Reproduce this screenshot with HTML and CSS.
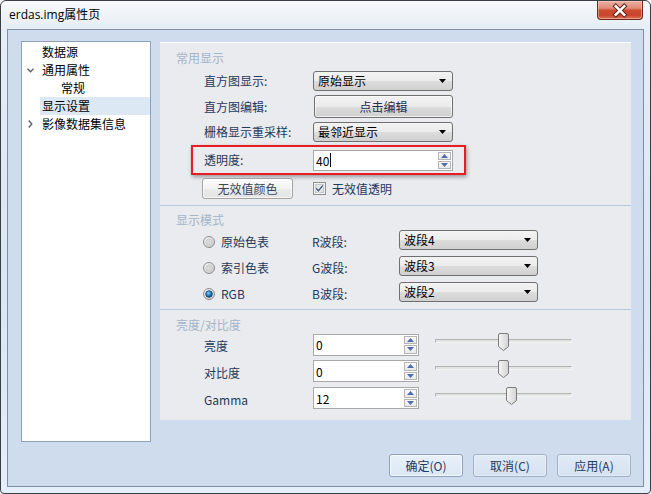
FILE: index.html
```html
<!DOCTYPE html>
<html lang="zh">
<head>
<meta charset="utf-8">
<title>erdas.img属性页</title>
<link rel="stylesheet" href="styles.css">
</head>
<body>
<div class="window">
  <div class="titlebar">
    <span class="title">erdas.img属性页</span>
    <div class="close">
      <svg width="46" height="19" viewBox="0 0 46 19">
        <path d="M18.5 5 L27.5 14 M27.5 5 L18.5 14" stroke="#5e2216" stroke-width="4.6" stroke-linecap="square" fill="none"/>
        <path d="M18.5 5 L27.5 14 M27.5 5 L18.5 14" stroke="#ffffff" stroke-width="2.6" stroke-linecap="square" fill="none"/>
      </svg>
    </div>
  </div>
  <div class="client">
    <div class="main">
      <ul class="tree">
        <li class="trow"><span class="twisty"></span><span class="tlabel">数据源</span></li>
        <li class="trow"><span class="twisty"><svg width="7" height="5" viewBox="0 0 7 5"><path d="M0.5 0.8 L3.5 3.8 L6.5 0.8" fill="none" stroke="#5b6270" stroke-width="1.4"/></svg></span><span class="tlabel">通用属性</span></li>
        <li class="trow sub"><span class="twisty"></span><span class="tlabel">常规</span></li>
        <li class="trow"><span class="twisty"></span><span class="tlabel selected">显示设置</span></li>
        <li class="trow"><span class="twisty"><svg width="5" height="8" viewBox="0 0 5 8"><path d="M0.8 0.5 L3.8 4 L0.8 7.5" fill="none" stroke="#5b6270" stroke-width="1.4"/></svg></span><span class="tlabel">影像数据集信息</span></li>
      </ul>

      <div class="panel">
        <section class="group g1">
          <div class="ghead">常用显示</div>
          <div class="row r26">
            <span class="lab">直方图显示:</span>
            <div class="combo w140"><span>原始显示</span><svg width="7" height="4" viewBox="0 0 7 4"><path d="M0 0 H7 L3.5 4 Z" fill="#000"/></svg></div>
          </div>
          <div class="row r25">
            <span class="lab">直方图编辑:</span>
            <button class="btn wide">点击编辑</button>
          </div>
          <div class="row r26">
            <span class="lab">栅格显示重采样:</span>
            <div class="combo w140"><span>最邻近显示</span><svg width="7" height="4" viewBox="0 0 7 4"><path d="M0 0 H7 L3.5 4 Z" fill="#000"/></svg></div>
          </div>
          <div class="hl">
            <span class="lab inner">透明度:</span>
            <div class="num w140 h21"><span class="val">40<i class="caret"></i></span>
              <span class="spin"><span class="sb"><svg width="7" height="4" viewBox="0 0 7 4"><path d="M0 4 H7 L3.5 0 Z" fill="#4c6db0"/></svg></span><span class="sb"><svg width="7" height="4" viewBox="0 0 7 4"><path d="M0 0 H7 L3.5 4 Z" fill="#4c6db0"/></svg></span></span>
            </div>
          </div>
          <div class="row r26">
            <button class="btn small">无效值颜色</button>
            <span class="check"><svg width="13" height="13" viewBox="0 0 13 13"><rect x="0.5" y="0.5" width="12" height="12" fill="#f3f3f3" stroke="#8e8f8f"/><rect x="2.5" y="2.5" width="8" height="8" fill="#dfe2e6" stroke="#c3c7cc"/><path d="M3.2 6.4 L5.4 8.8 L9.8 3.4" fill="none" stroke="#ffffff" stroke-width="3"/><path d="M3.2 6.4 L5.4 8.8 L9.8 3.4" fill="none" stroke="#50617e" stroke-width="1.6"/></svg></span>
            <span class="cklab">无效值透明</span>
          </div>
        </section>

        <section class="group g2">
          <div class="ghead">显示模式</div>
          <div class="row r26">
            <span class="rcol"><svg class="radio" width="12" height="12" viewBox="0 0 12 12"><defs><radialGradient id="rg1" cx="0.35" cy="0.3" r="0.8"><stop offset="0" stop-color="#ffffff"/><stop offset="1" stop-color="#c9c9c9"/></radialGradient></defs><circle cx="6" cy="6" r="5.5" fill="url(#rg1)" stroke="#8d8d8d"/><circle cx="6" cy="6" r="3.2" fill="#d9d9d9" stroke="#c2c2c2" stroke-width="0.8"/></svg><span class="rlab">原始色表</span></span>
            <span class="blab">R波段:</span>
            <div class="combo w139 up"><span>波段4</span><svg width="7" height="4" viewBox="0 0 7 4"><path d="M0 0 H7 L3.5 4 Z" fill="#000"/></svg></div>
          </div>
          <div class="row r26">
            <span class="rcol"><svg class="radio" width="12" height="12" viewBox="0 0 12 12"><circle cx="6" cy="6" r="5.5" fill="url(#rg1)" stroke="#8d8d8d"/><circle cx="6" cy="6" r="3.2" fill="#d9d9d9" stroke="#c2c2c2" stroke-width="0.8"/></svg><span class="rlab">索引色表</span></span>
            <span class="blab">G波段:</span>
            <div class="combo w139 up"><span>波段3</span><svg width="7" height="4" viewBox="0 0 7 4"><path d="M0 0 H7 L3.5 4 Z" fill="#000"/></svg></div>
          </div>
          <div class="row r26">
            <span class="rcol"><svg class="radio" width="12" height="12" viewBox="0 0 12 12"><defs><radialGradient id="rg2" cx="0.4" cy="0.35" r="0.7"><stop offset="0" stop-color="#7fd0ff"/><stop offset="0.6" stop-color="#1d78c0"/><stop offset="1" stop-color="#0b3a6a"/></radialGradient></defs><circle cx="6" cy="6" r="5.5" fill="url(#rg1)" stroke="#8d8d8d"/><circle cx="6" cy="6" r="3.3" fill="url(#rg2)" stroke="#1b3c63" stroke-width="0.8"/></svg><span class="rlab">RGB</span></span>
            <span class="blab">B波段:</span>
            <div class="combo w139 up"><span>波段2</span><svg width="7" height="4" viewBox="0 0 7 4"><path d="M0 0 H7 L3.5 4 Z" fill="#000"/></svg></div>
          </div>
        </section>

        <section class="group g3">
          <div class="ghead">亮度/对比度</div>
          <div class="row r26">
            <span class="lab">亮度</span>
            <div class="num w106 h22 up2"><span class="val">0</span>
              <span class="spin"><span class="sb"><svg width="7" height="4" viewBox="0 0 7 4"><path d="M0 4 H7 L3.5 0 Z" fill="#4c6db0"/></svg></span><span class="sb"><svg width="7" height="4" viewBox="0 0 7 4"><path d="M0 0 H7 L3.5 4 Z" fill="#4c6db0"/></svg></span></span>
            </div>
            <div class="slider"><span class="track"></span><span class="thumb" style="left:46%"><svg width="11" height="18" viewBox="0 0 11 18"><defs><linearGradient id="tg" x1="0" y1="0" x2="1" y2="0"><stop offset="0" stop-color="#f7f7f7"/><stop offset="1" stop-color="#d2d2d2"/></linearGradient></defs><path d="M0.5 2 Q0.5 0.5 2 0.5 H9 Q10.5 0.5 10.5 2 V13.5 L5.5 17.5 L0.5 13.5 Z" fill="url(#tg)" stroke="#7b7b7b"/></svg></span></div>
          </div>
          <div class="row r27">
            <span class="lab">对比度</span>
            <div class="num w106 h22 up2"><span class="val">0</span>
              <span class="spin"><span class="sb"><svg width="7" height="4" viewBox="0 0 7 4"><path d="M0 4 H7 L3.5 0 Z" fill="#4c6db0"/></svg></span><span class="sb"><svg width="7" height="4" viewBox="0 0 7 4"><path d="M0 0 H7 L3.5 4 Z" fill="#4c6db0"/></svg></span></span>
            </div>
            <div class="slider"><span class="track"></span><span class="thumb" style="left:46%"><svg width="11" height="18" viewBox="0 0 11 18"><path d="M0.5 2 Q0.5 0.5 2 0.5 H9 Q10.5 0.5 10.5 2 V13.5 L5.5 17.5 L0.5 13.5 Z" fill="url(#tg)" stroke="#7b7b7b"/></svg></span></div>
          </div>
          <div class="row r27">
            <span class="lab">Gamma</span>
            <div class="num w106 h22 up2"><span class="val">12</span>
              <span class="spin"><span class="sb"><svg width="7" height="4" viewBox="0 0 7 4"><path d="M0 4 H7 L3.5 0 Z" fill="#4c6db0"/></svg></span><span class="sb"><svg width="7" height="4" viewBox="0 0 7 4"><path d="M0 0 H7 L3.5 4 Z" fill="#4c6db0"/></svg></span></span>
            </div>
            <div class="slider"><span class="track"></span><span class="thumb" style="left:52%"><svg width="11" height="18" viewBox="0 0 11 18"><path d="M0.5 2 Q0.5 0.5 2 0.5 H9 Q10.5 0.5 10.5 2 V13.5 L5.5 17.5 L0.5 13.5 Z" fill="url(#tg)" stroke="#7b7b7b"/></svg></span></div>
          </div>
        </section>
      </div>
    </div>

    <div class="footer">
      <button class="fbtn default">确定(O)</button>
      <button class="fbtn">取消(C)</button>
      <button class="fbtn">应用(A)</button>
    </div>
  </div>
</div>
</body>
</html>
```

FILE: styles.css
```css
* { box-sizing: border-box; margin: 0; padding: 0; }
html, body { width: 651px; height: 494px; overflow: hidden; }
body {
  font-family: "Noto Sans CJK SC", "Noto Sans", sans-serif;
  font-size: 12px;
  background: #ffffff;
}
ul { list-style: none; }
button { font-family: inherit; font-size: 12px; }

.window {
  width: 651px;
  height: 494px;
  border: 1px solid #3a3f47;
  border-radius: 6px 6px 4px 4px;
  background: linear-gradient(#f7f9fb 0, #e6edf5 28px, #dae6f4 60%, #e4eff9 100%);
  display: flex;
  flex-direction: column;
  padding: 0 6px 6px;
}

.titlebar {
  height: 28px;
  margin: 0 -6px;
  padding: 0 7px 0 8px;
  display: flex;
  justify-content: space-between;
  align-items: flex-start;
}
.title {
  padding-top: 6px;
  line-height: 16px;
  color: #000;
  font-family: "Open Sans", "Noto Sans CJK SC", sans-serif;
  font-size: 12px;
}
.close {
  width: 46px;
  height: 19px;
  border: 1px solid #6e2a1f;
  border-top: none;
  border-radius: 0 0 4px 4px;
  background: linear-gradient(#eab2a5 0%, #e08a76 40%, #cd4a31 52%, #c9452c 80%, #dd7b60 100%);
  box-shadow: inset 0 0 0 1px rgba(255, 210, 200, 0.45);
  display: flex;
}
.close svg { display: block; }

.client {
  flex: 1;
  border: 1px solid #7f8ea4;
  background: #cfdcee;
  padding: 11px 11px 0 13px;
  display: flex;
  flex-direction: column;
}
.main { display: flex; align-items: flex-start; }

/* tree */
.tree {
  width: 130px;
  height: 401px;
  border: 1px solid #8ca1bd;
  background: #ffffff;
  padding-top: 1px;
}
.trow {
  height: 18px;
  display: flex;
  align-items: center;
  color: #000;
  line-height: 18px;
}
.twisty {
  width: 18px;
  height: 18px;
  display: flex;
  align-items: center;
  justify-content: center;
  padding-right: 2px;
}
.twisty svg { display: block; }
.tlabel { padding: 0 2px; height: 18px; }
.tlabel.selected { flex: 1; background: #dde8f5; }
.trow.sub .tlabel { padding-left: 21px; }

/* panel */
.panel {
  width: 471px;
  margin: 1px 0 0 9px;
  background: #e9ebef;
  box-shadow: inset 0 1px 0 #fbfcfd;
  color: #1e395b;
}
.group { display: flex; flex-direction: column; }
.g1 { padding: 8px 0 4px; }
.g2 { padding: 6px 0 2px; border-top: 1px solid #b8c7db; }
.g3 { padding: 7px 0 7px; border-top: 1px solid #b8c7db; }
.ghead {
  height: 16px;
  line-height: 16px;
  padding-left: 16px;
  color: #a3b5ca;
}
.g1 .ghead { margin-bottom: 2px; }
.g2 .ghead { margin-bottom: 1px; }

.row { display: flex; align-items: center; }
.r25 { height: 25px; }
.r26 { height: 26px; }
.r27 { height: 27px; }
.lab { width: 109px; margin-left: 44px; line-height: 16px; white-space: nowrap; }
.lab.inner { margin-left: 0; }

.combo {
  height: 20px;
  border: 1px solid #707070;
  border-radius: 3px;
  background: linear-gradient(#f3f3f3 0%, #ebebeb 50%, #dddddd 51%, #d0d0d0 100%);
  display: flex;
  align-items: center;
  justify-content: space-between;
  padding: 0 6px 0 4px;
  color: #000;
  line-height: 16px;
}
.combo svg { display: block; }
.w140 { width: 140px; }
.w139 { width: 139px; }
.w106 { width: 106px; }
.up { margin-bottom: 5px; }
.up2 { margin-bottom: 3px; }

.btn {
  height: 23px;
  border: 1px solid #707070;
  border-radius: 3px;
  background: linear-gradient(#f2f2f2 0%, #ebebeb 50%, #dddddd 51%, #cfcfcf 100%);
  color: #1c304e;
  box-shadow: inset 0 0 0 1px rgba(255, 255, 255, 0.7);
}
.btn.wide { width: 139px; margin-left: 1px; }
.btn.small {
  width: 91px;
  height: 21px;
  margin-left: 42px;
  border-color: #a3a3a3;
  background: linear-gradient(#fbfbfb 0%, #f3f3f3 50%, #ebebeb 51%, #e3e3e3 100%);
  color: #3a4656;
}

.hl {
  margin-left: 31px;
  width: 275px;
  height: 30px;
  border: 2px solid #ea1c22;
  box-shadow: 1px 2px 4px rgba(0, 0, 0, 0.35);
  display: flex;
  align-items: center;
  padding-left: 11px;
}

.num {
  border: 1px solid #a8a8a8;
  background: #ffffff;
  display: flex;
  align-items: stretch;
  justify-content: space-between;
  color: #000;
}
.h21 { height: 21px; }
.h22 { height: 22px; }
.val { padding-left: 2px; line-height: 19px; display: flex; align-items: center; }
.caret { display: inline-block; width: 1px; height: 14px; background: #000; margin-left: 1px; }
.spin {
  width: 14px;
  display: flex;
  flex-direction: column;
  gap: 1px;
  padding: 1px 1px 1px 0;
}
.sb {
  flex: 1;
  border: 1px solid #b5b5b5;
  background: linear-gradient(#fafafa, #e8e8e8);
  display: flex;
  align-items: center;
  justify-content: center;
}
.sb svg { display: block; }

.check { margin-left: 20px; display: flex; margin-top: 1px; }
.check svg { display: block; }
.cklab { margin-left: 6px; line-height: 16px; color: #1e395b; margin-top: 1px; }

.rcol {
  width: 109px;
  margin-left: 43px;
  display: flex;
  align-items: center;
  gap: 6px;
}
.radio { display: block; flex: none; }
.rlab { line-height: 16px; }
.blab { width: 87px; line-height: 16px; }

.slider {
  position: relative;
  width: 137px;
  height: 18px;
  margin-left: 16px;
  margin-bottom: 8px;
}
.track {
  position: absolute;
  left: 0;
  right: 0;
  top: 6px;
  height: 4px;
  border: 1px solid #b3b3b3;
  border-bottom-color: #f4f4f4;
  border-right-color: #f4f4f4;
  background: #e3e3e3;
}
.thumb { position: absolute; top: 0; display: block; }
.thumb svg { display: block; }

.footer {
  margin-top: 12px;
  margin-right: 1px;
  display: flex;
  justify-content: flex-end;
  gap: 10px;
}
.fbtn {
  width: 74px;
  height: 23px;
  border: 1px solid #a1b2c8;
  border-radius: 3px;
  background: linear-gradient(#e1eaf6, #d6e2f1);
  color: #1e395b;
  box-shadow: inset 0 0 0 1px rgba(255, 255, 255, 0.35);
}
.fbtn.default {
  border-color: #8ea2bc;
  background: linear-gradient(#e9f0f9, #dce7f5);
  box-shadow: inset 0 0 0 1px #f4f8fd;
}
```
